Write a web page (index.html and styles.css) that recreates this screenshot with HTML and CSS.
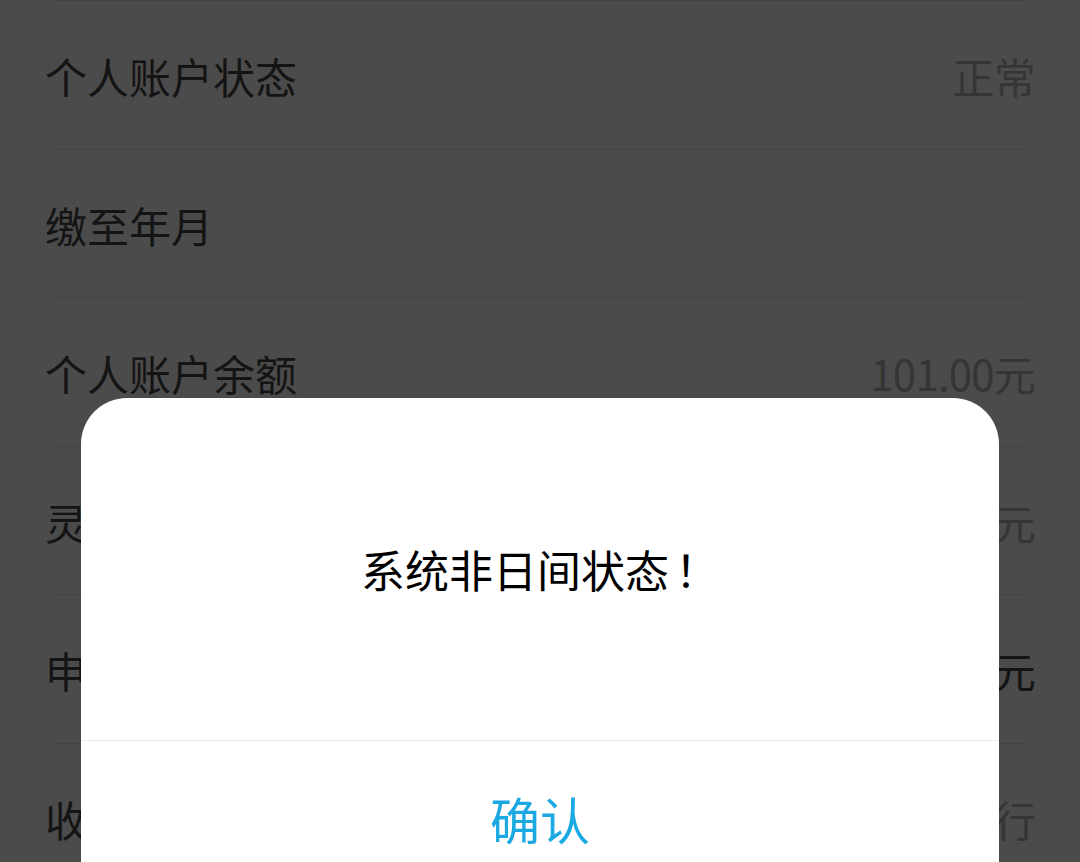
FILE: index.html
```html
<!DOCTYPE html>
<html lang="zh-CN">
  <head>
    <meta charset="UTF-8" />
    <meta name="viewport" content="width=device-width, initial-scale=1.0" />
    <title>个人账户</title>
    <link rel="stylesheet" href="styles.css">
  </head>
  <body>
    <div class="list">
      <div class="line"></div>
      <div class="row">
        <span class="label">个人账户状态</span>
        <span class="value">正常</span>
      </div>
      <div class="line"></div>
      <div class="row">
        <span class="label">缴至年月</span>
        <span class="value"></span>
      </div>
      <div class="line"></div>
      <div class="row">
        <span class="label">个人账户余额</span>
        <span class="value">101.00元</span>
      </div>
      <div class="line"></div>
      <div class="row">
        <span class="label">灵活就业缴费基数</span>
        <span class="value">0.00元</span>
      </div>
      <div class="line"></div>
      <div class="row">
        <span class="label">申报缴费金额</span>
        <span class="value dark">0.00元</span>
      </div>
      <div class="line"></div>
      <div class="row">
        <span class="label">收款银行</span>
        <span class="value">中国银行</span>
      </div>
    </div>

    <!-- 弹窗 -->
    <div class="mask">
      <div class="dialog">
        <div class="msg">系统非日间状态<span class="mark">！</span></div>
        <div class="btn">确认</div>
      </div>
    </div>
  </body>
</html>
```

FILE: styles.css
```css
* {
  box-sizing: border-box;
}
body {
  margin: 0;
  background-color: #4b4b4b;
  font-family: "Noto Sans CJK SC", "Noto Sans", sans-serif;
  overflow: hidden;
}
.list {
  width: 1080px;
}
.line {
  height: 1px;
  margin: 0 53px;
  background-color: #444444;
}
.row {
  height: 147.5px;
  padding: 2px 45px 0;
  display: flex;
  align-items: center;
  justify-content: space-between;
  font-size: 42px;
}
.label {
  color: #141414;
}
.value {
  color: #353535;
  letter-spacing: -0.8px;
}
.value.dark {
  color: #141414;
}
.mask {
  position: fixed;
  left: 0;
  top: 0;
  width: 100%;
  height: 100%;
}
.dialog {
  position: absolute;
  left: 81px;
  top: 398px;
  width: 918px;
  height: 520px;
  background-color: #ffffff;
  border-radius: 46px;
  display: flex;
  flex-direction: column;
}
.msg {
  height: 343px;
  display: flex;
  align-items: center;
  justify-content: center;
  font-size: 44px;
  color: #000000;
  border-bottom: 1px solid #ebebeb;
}
.mark {
  padding-left: 6px;
}
.btn {
  height: 154px;
  display: flex;
  align-items: center;
  justify-content: center;
  font-size: 50px;
  color: #1aa9e3;
}
```
